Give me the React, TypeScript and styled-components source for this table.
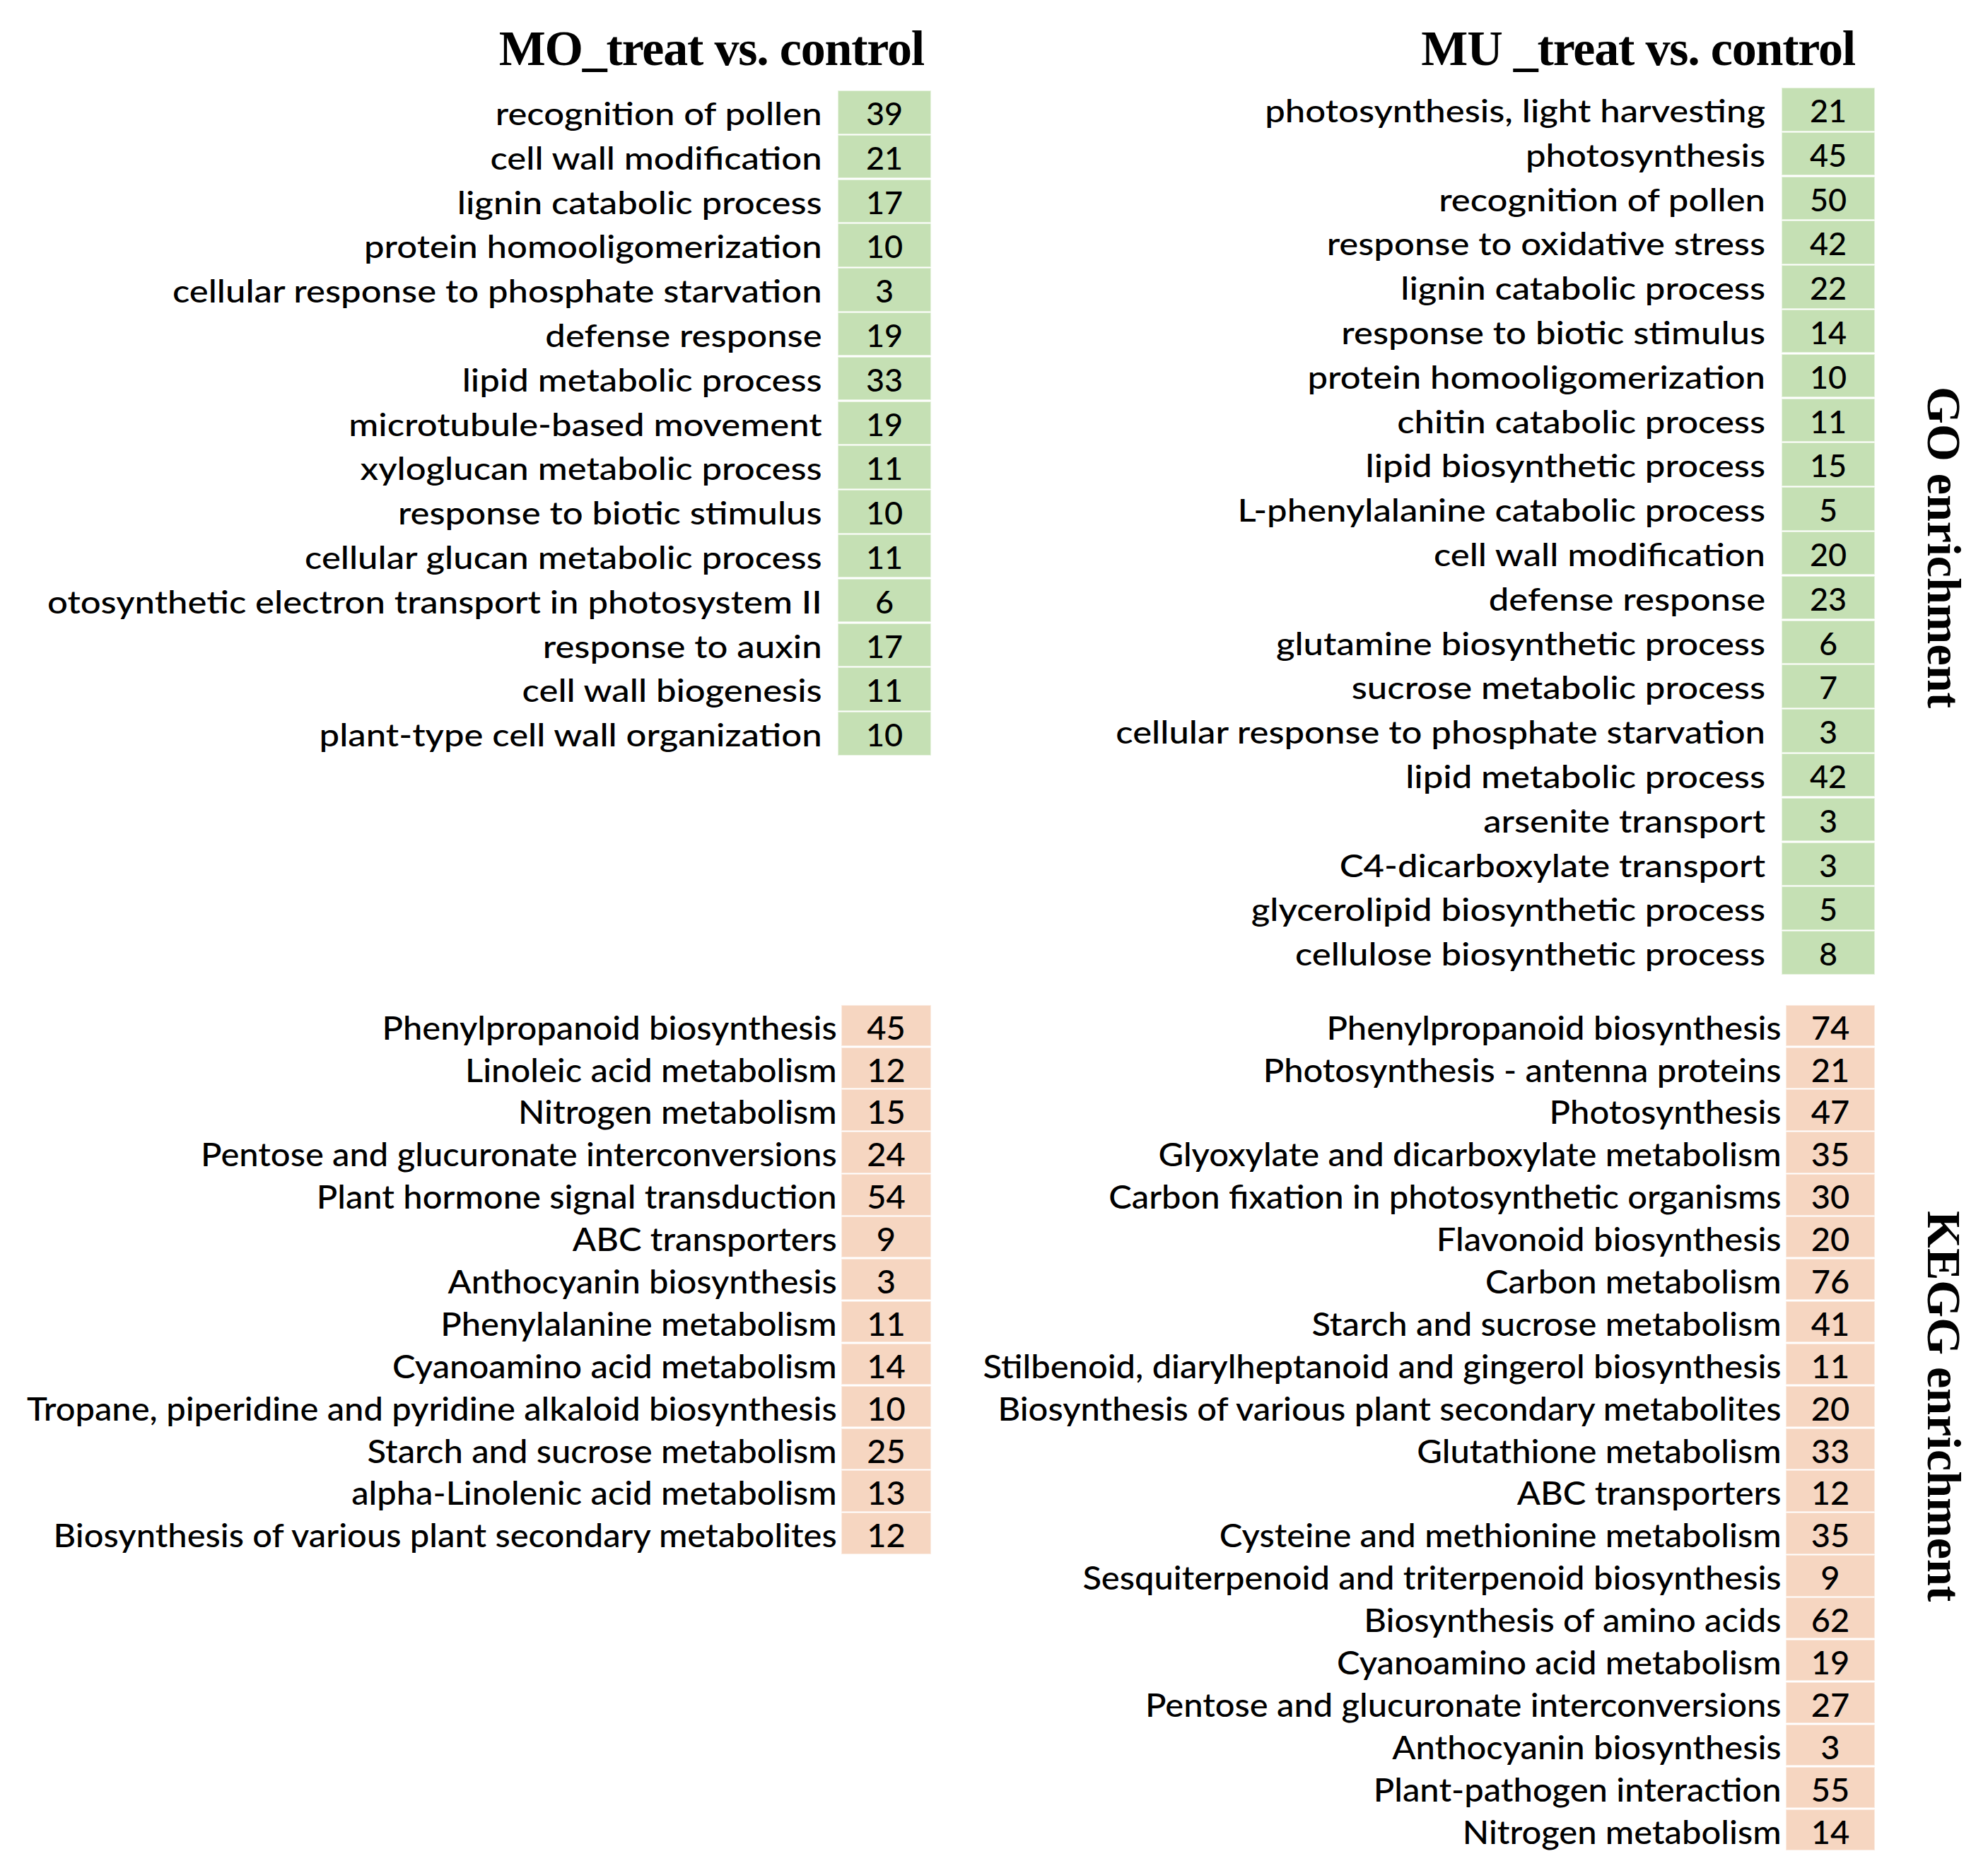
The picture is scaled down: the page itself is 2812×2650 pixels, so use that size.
import React from "react";
import styled, { createGlobalStyle } from "styled-components";

type Row = [string, number];

const goLeft: Row[] = [
  ["recognition of pollen", 39],
  ["cell wall modification", 21],
  ["lignin catabolic process", 17],
  ["protein homooligomerization", 10],
  ["cellular response to phosphate starvation", 3],
  ["defense response", 19],
  ["lipid metabolic process", 33],
  ["microtubule-based movement", 19],
  ["xyloglucan metabolic process", 11],
  ["response to biotic stimulus", 10],
  ["cellular glucan metabolic process", 11],
  ["otosynthetic electron transport in photosystem II", 6],
  ["response to auxin", 17],
  ["cell wall biogenesis", 11],
  ["plant-type cell wall organization", 10],
];

const goRight: Row[] = [
  ["photosynthesis, light harvesting", 21],
  ["photosynthesis", 45],
  ["recognition of pollen", 50],
  ["response to oxidative stress", 42],
  ["lignin catabolic process", 22],
  ["response to biotic stimulus", 14],
  ["protein homooligomerization", 10],
  ["chitin catabolic process", 11],
  ["lipid biosynthetic process", 15],
  ["L-phenylalanine catabolic process", 5],
  ["cell wall modification", 20],
  ["defense response", 23],
  ["glutamine biosynthetic process", 6],
  ["sucrose metabolic process", 7],
  ["cellular response to phosphate starvation", 3],
  ["lipid metabolic process", 42],
  ["arsenite transport", 3],
  ["C4-dicarboxylate transport", 3],
  ["glycerolipid biosynthetic process", 5],
  ["cellulose biosynthetic process", 8],
];

const keggLeft: Row[] = [
  ["Phenylpropanoid biosynthesis", 45],
  ["Linoleic acid metabolism", 12],
  ["Nitrogen metabolism", 15],
  ["Pentose and glucuronate interconversions", 24],
  ["Plant hormone signal transduction", 54],
  ["ABC transporters", 9],
  ["Anthocyanin biosynthesis", 3],
  ["Phenylalanine metabolism", 11],
  ["Cyanoamino acid metabolism", 14],
  ["Tropane, piperidine and pyridine alkaloid biosynthesis", 10],
  ["Starch and sucrose metabolism", 25],
  ["alpha-Linolenic acid metabolism", 13],
  ["Biosynthesis of various plant secondary metabolites", 12],
];

const keggRight: Row[] = [
  ["Phenylpropanoid biosynthesis", 74],
  ["Photosynthesis - antenna proteins", 21],
  ["Photosynthesis", 47],
  ["Glyoxylate and dicarboxylate metabolism", 35],
  ["Carbon fixation in photosynthetic organisms", 30],
  ["Flavonoid biosynthesis", 20],
  ["Carbon metabolism", 76],
  ["Starch and sucrose metabolism", 41],
  ["Stilbenoid, diarylheptanoid and gingerol biosynthesis", 11],
  ["Biosynthesis of various plant secondary metabolites", 20],
  ["Glutathione metabolism", 33],
  ["ABC transporters", 12],
  ["Cysteine and methionine metabolism", 35],
  ["Sesquiterpenoid and triterpenoid biosynthesis", 9],
  ["Biosynthesis of amino acids", 62],
  ["Cyanoamino acid metabolism", 19],
  ["Pentose and glucuronate interconversions", 27],
  ["Anthocyanin biosynthesis", 3],
  ["Plant-pathogen interaction", 55],
  ["Nitrogen metabolism", 14],
];

const GlobalStyle = createGlobalStyle`
  html, body {
    margin: 0;
    padding: 0;
    background: #fff;
  }
  body {
    width: 2812px;
    height: 2650px;
    overflow: hidden;
  }
`;

const Page = styled.div`
  width: 2812px;
  height: 2650px;
  box-sizing: border-box;
  padding-top: 29px;
  display: grid;
  grid-template-columns: 1316px 1335px 1fr;
  align-content: start;
`;

const Title = styled.h1<{ $pad: number }>`
  margin: 0;
  justify-self: end;
  padding-right: ${(p) => p.$pad}px;
  font-family: "Liberation Serif", "Times New Roman", serif;
  font-weight: bold;
  font-size: 70px;
  line-height: 80px;
  letter-spacing: -1.2px;
  color: #000;
  white-space: pre;
`;

const Table = styled.div<{ $top: number; $gap: number; $cell: number; $row: number; $rowGap: number }>`
  margin-top: ${(p) => p.$top}px;
  display: grid;
  justify-content: end;
  align-content: start;
  grid-template-columns: auto ${(p) => p.$cell}px;
  grid-auto-rows: ${(p) => p.$row}px;
  column-gap: ${(p) => p.$gap}px;
  row-gap: ${(p) => p.$rowGap}px;
`;

// the source figure is a stretched spreadsheet, so labels are widened a little
const Label = styled.div<{ $size: number; $row: number; $stretch: number }>`
  box-sizing: border-box;
  padding-top: 4px;
  font-family: Lato, "Liberation Sans", sans-serif;
  font-weight: 500;
  font-size: ${(p) => p.$size}px;
  line-height: ${(p) => p.$row - 4}px;
  color: #000;
  text-align: right;
  white-space: nowrap;
  transform: scaleX(${(p) => p.$stretch});
  transform-origin: right center;
`;

const Cell = styled.div<{ $tone: "go" | "kegg"; $size: number; $row: number }>`
  box-sizing: border-box;
  padding-top: 4px;
  background: ${(p) => (p.$tone === "go" ? "#c5e0b4" : "#f6d6c1")};
  box-shadow: 0 0 0 1px ${(p) => (p.$tone === "go" ? "#e6f2de" : "#fbebe1")};
  font-family: Lato, "Liberation Sans", sans-serif;
  font-weight: 500;
  font-size: ${(p) => p.$size}px;
  line-height: ${(p) => p.$row - 4}px;
  color: #000;
  text-align: center;
`;

const SideLabel = styled.div<{ $offset: number }>`
  writing-mode: vertical-rl;
  justify-self: start;
  align-self: start;
  margin-top: ${(p) => p.$offset}px;
  padding-left: 65px;
  font-family: "Liberation Serif", "Times New Roman", serif;
  font-weight: bold;
  font-size: 68px;
  line-height: 68px;
  color: #000;
  white-space: nowrap;
`;

type TableProps = {
  rows: Row[];
  tone: "go" | "kegg";
  top: number;
  gap: number;
  cell: number;
  row: number;
  rowGap: number;
  size: number;
  stretch: number;
};

const EnrichTable = ({ rows, tone, top, gap, cell, row, rowGap, size, stretch }: TableProps) => (
  <Table $top={top} $gap={gap} $cell={cell} $row={row} $rowGap={rowGap}>
    {rows.map(([name, count], i) => (
      <React.Fragment key={i}>
        <Label $size={size} $row={row} $stretch={stretch}>
          {name}
        </Label>
        <Cell $tone={tone} $size={size} $row={row}>
          {count}
        </Cell>
      </React.Fragment>
    ))}
  </Table>
);

const App = () => (
  <>
    <GlobalStyle />
    <Page>
      <Title $pad={9}>MO_treat vs. control</Title>
      <Title $pad={27}>MU _treat vs. control</Title>
      <div />

      <EnrichTable rows={goLeft} tone="go" top={20} gap={23} cell={130} row={59.5} rowGap={3.3} size={45} stretch={1.13} />
      <EnrichTable rows={goRight} tone="go" top={16} gap={24} cell={130} row={59.5} rowGap={3.3} size={45} stretch={1.13} />
      <SideLabel $offset={438}>GO enrichment</SideLabel>

      <EnrichTable rows={keggLeft} tone="kegg" top={45} gap={7} cell={125} row={56.3} rowGap={3.6} size={47} stretch={1.04} />
      <EnrichTable rows={keggRight} tone="kegg" top={45} gap={7} cell={124} row={56.3} rowGap={3.6} size={47} stretch={1.04} />
      <SideLabel $offset={335}>KEGG enrichment</SideLabel>
    </Page>
  </>
);

export default App;
